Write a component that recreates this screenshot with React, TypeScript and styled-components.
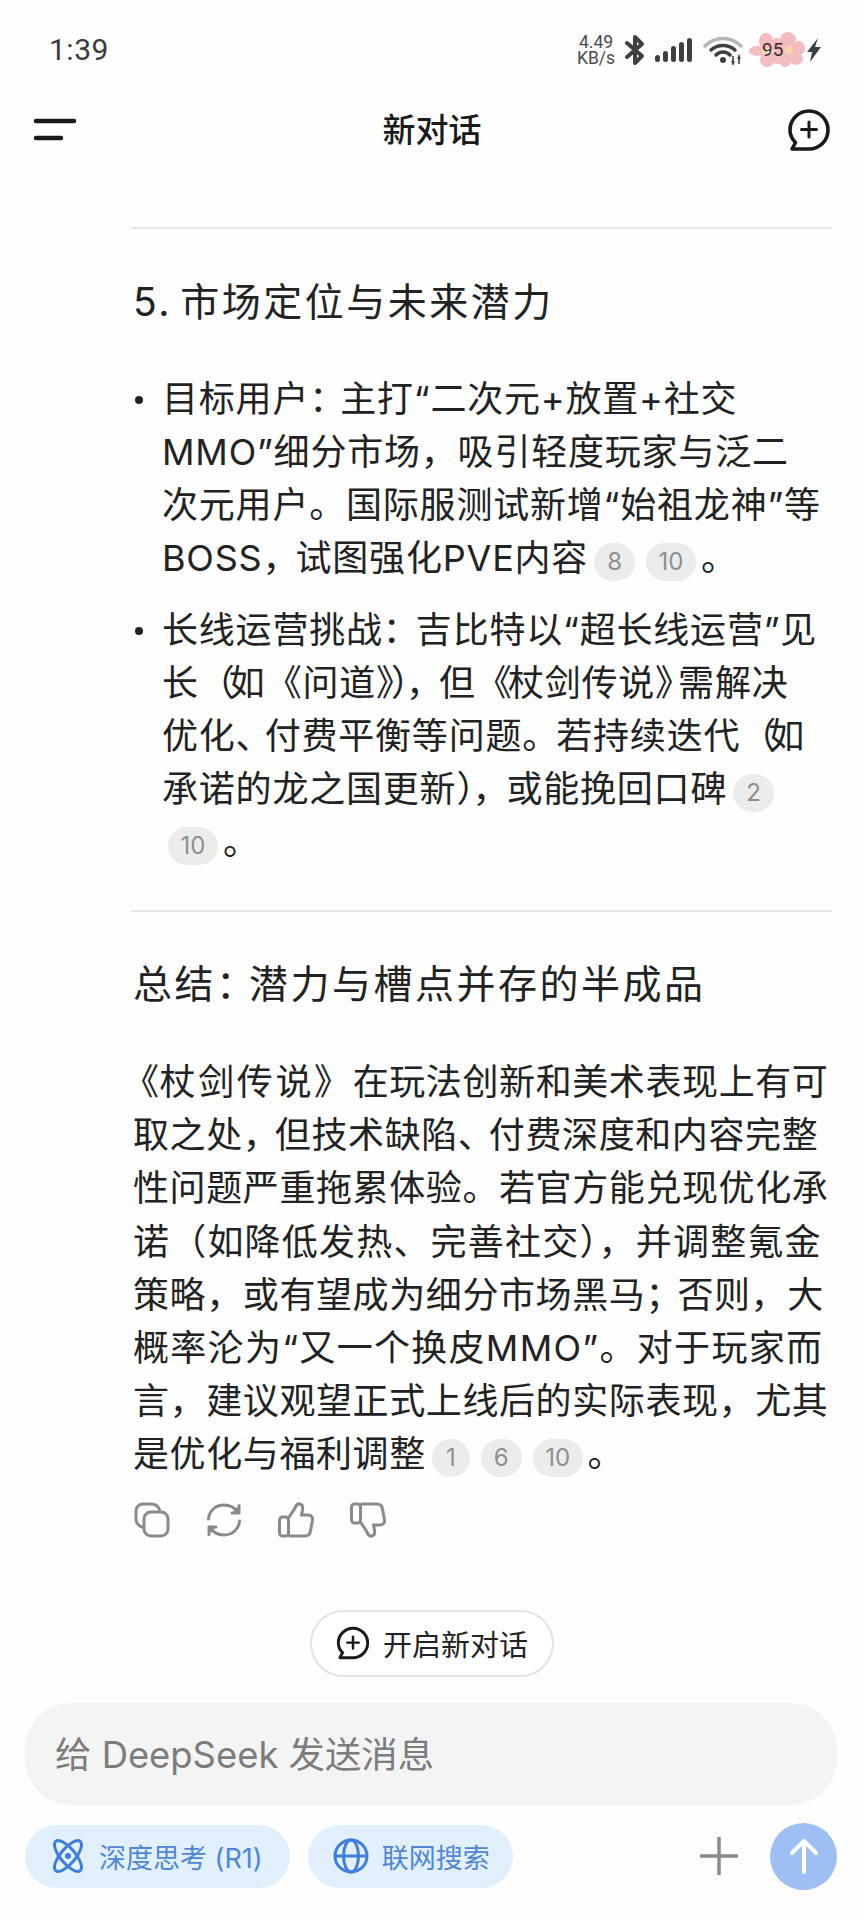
import React from "react";
import styled, { createGlobalStyle } from "styled-components";

const Global = createGlobalStyle`
  html, body { margin: 0; padding: 0; background: #fff; }
  * { box-sizing: border-box; }
`;
const FONT = `Inter, "Noto Sans CJK SC", "Noto Sans", sans-serif`;

const Page = styled.div`
  width: 864px; height: 1920px; overflow: hidden; background: #fefefe;
  display: flex; flex-direction: column; font-family: ${FONT}; color: #1f1f1f;
`;
const StatusBar = styled.div`
  height: 88px; padding: 32px 43px 0 49px; display: flex; justify-content: space-between; align-items: flex-start;
`;
const Clock = styled.div`
  font-family: Roboto, sans-serif; font-size: 30px; line-height: 36px; color: #3a3a3a; letter-spacing: 0.5px;
`;
const StatusIcons = styled.div`
  display: flex; align-items: center; height: 36px;
`;
const Speed = styled.div`
  font-family: Roboto, sans-serif; font-size: 17.5px; line-height: 16px; color: #4a4a4a; text-align: center; width: 40px; margin-right: 8px;
`;
const FlowerBattery = styled.div`
  position: relative; width: 56px; height: 36px; margin: 0 2px 0 6px;
`;
const BatteryText = styled.span`
  position: absolute; left: 13px; top: 6px; font-family: Roboto, sans-serif; font-size: 19px; line-height: 24px; color: #3b2a2a;
`;
const Header = styled.div`
  height: 84px; padding: 0 33px; display: flex; align-items: center; justify-content: space-between;
`;
const Title = styled.div`
  font-size: 33px; font-weight: 500; color: #1a1a1a; line-height: 44px;
`;
const Content = styled.div`
  padding: 55px 32px 0 131px; display: flex; flex-direction: column; flex: 1;
`;
const Rule = styled.div<{ $top?: number }>`
  height: 2px; background: #e6e6e6; margin-top: ${(p) => p.$top ?? 0}px;
`;
const Heading = styled.div<{ $top: number }>`
  margin: ${(p) => p.$top}px 0 0 2px; font-size: 39px; letter-spacing: 2.5px; word-spacing: -5px; line-height: 56px; color: #222; white-space: nowrap;
`;
const List = styled.ul`
  list-style: none; margin: 43px 0 0; padding: 0 0 0 31px; display: flex; flex-direction: column; gap: 19px;
`;
const Item = styled.li`
  position: relative; font-size: 36px; line-height: 53px; letter-spacing: 0.8px; color: #222; white-space: nowrap;
  &::before {
    content: ""; position: absolute; left: -27px; top: 23px; width: 8px; height: 8px; border-radius: 50%; background: #222;
  }
`;
const Paragraph = styled.p`
  margin: 44px 0 0 2px; font-size: 36px; line-height: 53.2px; letter-spacing: 0.6px; color: #222; white-space: nowrap;
`;
/* A run of text whose tracking differs: the reference's font sets its punctuation narrower or wider than Noto does. */
const Run = styled.span<{ $ls: number; $l?: number }>`
  letter-spacing: ${(p) => p.$ls}px; margin-left: ${(p) => p.$l ?? 0}px;
`;
const Cite = styled.span<{ $wide?: boolean }>`
  display: inline-block; vertical-align: 1px; height: 38px; min-width: 38px; padding: 0 ${(p) => (p.$wide ? 12.5 : 13)}px;
  margin: 0 5px 0 6px; border-radius: 19px; background: #ececec; color: #8f8f8f;
  font-size: 24px; line-height: 38px; text-align: center; letter-spacing: 0;
`;
const Actions = styled.div`
  display: flex; gap: 36px; margin: 20px 0 0 3px; color: #8a8a8a;
`;
const NewChatRow = styled.div`
  display: flex; margin: 72px 0 0 179px;
`;
const NewChatButton = styled.div`
  height: 67px; width: 244px; border: 2px solid #e3e3e3; border-radius: 34px; background: #fff;
  display: flex; align-items: center; justify-content: center; gap: 13px; font-size: 29px; color: #222;
`;
const Composer = styled.div`
  padding: 0 27px 30px 25px; display: flex; flex-direction: column; gap: 17px;
`;
const InputBox = styled.div`
  height: 102px; border-radius: 46px; background: #f4f4f5; padding: 0 0 4px 30px; display: flex; align-items: center;
  font-size: 36.4px; color: #7c7c7c; white-space: nowrap;
`;
const Toolbar = styled.div`
  display: flex; align-items: center; gap: 18px; height: 68px;
`;
const Chip = styled.div<{ $right: number }>`
  height: 63px; border-radius: 32px; background: #e2effd; color: #4f86d8; padding: 0 ${(p) => p.$right}px 0 25px;
  display: flex; align-items: center; gap: 13px; font-size: 27px; white-space: nowrap;
`;
const Spacer = styled.div`flex: 1;`;
const SendButton = styled.div`
  width: 67px; height: 67px; border-radius: 50%; background: #9dbff4; display: flex; align-items: center; justify-content: center; margin-left: 14px;
`;

const Bars = () => (
  <svg width="37" height="26" viewBox="0 0 37 26" style={{ marginRight: 11 }}>
    <g fill="#3f3f3f">
      <rect x="0" y="18" width="5" height="7" rx="2.5" />
      <rect x="8" y="14" width="5" height="11" rx="2.5" />
      <rect x="16" y="9" width="5" height="16" rx="2.5" />
      <rect x="24" y="5" width="5" height="20" rx="2.5" />
      <rect x="32" y="1" width="5" height="24" rx="2.5" />
    </g>
  </svg>
);
const Bluetooth = () => (
  <svg width="22" height="32" viewBox="0 0 22 32" style={{ marginRight: 9 }}>
    <path d="M3 9 L18 22 L11 29 V3 L18 10 L3 23" fill="none" stroke="#3f3f3f" strokeWidth="4" strokeLinejoin="round" strokeLinecap="round" />
  </svg>
);
const Wifi = () => (
  <svg width="40" height="30" viewBox="0 0 40 30">
    <path d="M2 11 C12 1 28 1 38 11" fill="none" stroke="#b5b5b5" strokeWidth="3.5" strokeLinecap="round" />
    <path d="M8 15 C15 9 25 9 32 15" fill="none" stroke="#3f3f3f" strokeWidth="3.5" strokeLinecap="round" />
    <path d="M13 20 C17 16 23 16 27 20" fill="none" stroke="#3f3f3f" strokeWidth="3.5" strokeLinecap="round" />
    <circle cx="20" cy="25" r="3" fill="#3f3f3f" />
    <path d="M30 21 V29 M29 26 L30 29 L31 26 M36 29 V21 M35 24 L36 21 L37 24" stroke="#3f3f3f" strokeWidth="1.6" fill="none" />
  </svg>
);
const Flowers = () => (
  <svg width="56" height="36" viewBox="0 0 56 36">
    <g fill="#f3bcc0">
      <ellipse cx="8" cy="19" rx="8" ry="5" />
      <ellipse cx="17" cy="9" rx="7" ry="8" />
      <ellipse cx="28" cy="13" rx="7" ry="7" />
      <ellipse cx="18" cy="28" rx="7" ry="7" />
      <ellipse cx="28" cy="25" rx="7" ry="7" />
      <ellipse cx="39" cy="8" rx="8" ry="8" />
      <ellipse cx="50" cy="16" rx="6" ry="7" />
      <ellipse cx="36" cy="28" rx="6" ry="7" />
      <ellipse cx="47" cy="27" rx="7" ry="6" />
      <ellipse cx="40" cy="19" rx="7" ry="7" />
    </g>
    <circle cx="40" cy="18" r="4" fill="#f7d6a8" />
    <circle cx="15" cy="19" r="3" fill="#f7d6a8" />
  </svg>
);
const Bolt = () => (
  <svg width="14" height="24" viewBox="0 0 14 24">
    <path d="M11 0 L0 14 H5 L3 24 L14 9 H8 Z" fill="#3f3f3f" />
  </svg>
);
const Menu = () => (
  <svg width="44" height="24" viewBox="0 0 44 24">
    <path d="M3 3 H41 M3 20 H28" stroke="#1a1a1a" strokeWidth="4.5" strokeLinecap="round" fill="none" />
  </svg>
);
const PlusBubble = ({ size, stroke }: { size: number; stroke: number }) => (
  <svg width={size} height={size} viewBox="0 0 44 44">
    <path
      d="M22 3 C32.5 3 41 11.5 41 22 C41 32.5 32.5 41 22 41 H5 L8.5 34.5 C5 31 3 26.7 3 22 C3 11.5 11.5 3 22 3 Z"
      fill="none" stroke="#1a1a1a" strokeWidth={stroke} strokeLinejoin="round"
    />
    <path d="M22 14 V29 M14.5 21.5 H29.5" stroke="#1a1a1a" strokeWidth={stroke - 0.6} strokeLinecap="round" />
  </svg>
);
const Copy = () => (
  <svg width="36" height="36" viewBox="0 0 36 36" fill="none" stroke="currentColor" strokeWidth="3">
    <rect x="10" y="10" width="24" height="24" rx="7" />
    <path d="M8 25 C4 23.5 2 21 2 17 V9 C2 5 5 2 9 2 H17 C21 2 24 4 25.5 7.5" strokeLinecap="round" />
  </svg>
);
const Refresh = () => (
  <svg width="36" height="36" viewBox="0 0 36 36" fill="none" stroke="currentColor" strokeWidth="3" strokeLinecap="round" strokeLinejoin="round">
    <path d="M2.5 17 C3 9 9.5 3 18 3 C24 3 28.5 5.5 32 10" />
    <path d="M33 3.5 V11 H26" fill="currentColor" />
    <path d="M33.5 19 C33 27 26.5 33 18 33 C12 33 7.5 30.5 4 26" />
    <path d="M3 32.5 V25 H10" fill="currentColor" />
  </svg>
);
const Thumb = () => (
  <>
    <rect x="1.5" y="15" width="9" height="19" rx="3" />
    <path d="M10.5 16 L17 6 C18 3 20 1.5 22 2 C24.5 2.5 25 5 24.5 8 L23.5 13 H30 C33.5 13 35 15.5 34.5 18 L32.5 29 C32 32 30 34 27 34 H10.5" />
  </>
);
const Like = () => (
  <svg width="36" height="36" viewBox="0 0 36 36" fill="none" stroke="currentColor" strokeWidth="3" strokeLinejoin="round">
    <Thumb />
  </svg>
);
const Dislike = () => (
  <svg width="36" height="36" viewBox="0 0 36 36" fill="none" stroke="currentColor" strokeWidth="3" strokeLinejoin="round">
    <g transform="matrix(1 0 0 -1 0 36)">
      <Thumb />
    </g>
  </svg>
);
const Atom = () => (
  <svg width="36" height="36" viewBox="0 0 36 36" fill="none" stroke="#3f7fdc" strokeWidth="3">
    <ellipse cx="18" cy="18" rx="7.5" ry="19" transform="rotate(-40 18 18)" />
    <ellipse cx="18" cy="18" rx="7.5" ry="19" transform="rotate(40 18 18)" />
    <circle cx="18" cy="18" r="3" fill="#3f7fdc" stroke="none" />
  </svg>
);
const Globe = () => (
  <svg width="36" height="36" viewBox="0 0 36 36" fill="none" stroke="#3f7fdc" strokeWidth="3">
    <circle cx="18" cy="18" r="16" />
    <ellipse cx="18" cy="18" rx="7.5" ry="16" />
    <path d="M2 18 H34" />
  </svg>
);
const Plus = () => (
  <svg width="38" height="38" viewBox="0 0 38 38">
    <path d="M19 0 V38 M0 19 H38" stroke="#8a8a8a" strokeWidth="3.5" strokeLinecap="round" />
  </svg>
);
const ArrowUp = () => (
  <svg width="30" height="36" viewBox="0 0 30 36" fill="none" stroke="#fff" strokeWidth="4" strokeLinecap="round" strokeLinejoin="round">
    <path d="M15 34 V3 M3 15 L15 3 L27 15" />
  </svg>
);

export default function App() {
  return (
    <Page>
      <Global />
      <StatusBar>
        <Clock>1:39</Clock>
        <StatusIcons>
          <Speed>4.49<br />KB/s</Speed>
          <Bluetooth />
          <Bars />
          <Wifi />
          <FlowerBattery>
            <Flowers />
            <BatteryText>95</BatteryText>
          </FlowerBattery>
          <Bolt />
        </StatusIcons>
      </StatusBar>
      <Header>
        <Menu />
        <Title>新对话</Title>
        <PlusBubble size={44} stroke={3.6} />
      </Header>
      <Content>
        <Rule />
        <Heading $top={45}>5. 市场定位与未来潜力</Heading>
        <List>
          <Item>
            目标用户<Run $ls={-5}>：</Run>主打“二次元+放置+社交<br />
            MMO”细分市场，吸引轻度玩家与泛二<br />
            次元用户。国际服测试新增“始祖龙神”等<br />
            BOSS<Run $ls={-3}>，</Run>试图强化PVE内容<Cite>8</Cite><Cite $wide>10</Cite>。
          </Item>
          <Item>
            长线运营挑战<Run $ls={-3}>：</Run>吉比特以“超长线运营”见<br />
            长<Run $ls={-6}>（</Run>如《问道<Run $ls={-3}>》），</Run>但<Run $ls={-4}>《</Run>杖剑传说<Run $ls={-13}>》</Run>需解决<br />
            优化<Run $ls={-7}>、</Run>付费平衡等问题<Run $ls={-2}>。</Run>若持续迭代<Run $ls={-8}>（</Run>如<br />
            承诺的龙之国更新<Run $ls={-2}>），</Run>或能挽回口碑<Cite>2</Cite><br />
            <Cite $wide>10</Cite>。
          </Item>
        </List>
        <Rule $top={41} />
        <Heading $top={44}>总结<Run $ls={-6}>：</Run>潜力与槽点并存的半成品</Heading>
        <Paragraph>
          <Run $ls={0.6} $l={-10}>《</Run><Run $ls={2.6}>杖剑传说》</Run>在玩法创新和美术表现上有可<br />
          取之处<Run $ls={-4}>，</Run>但技术缺陷<Run $ls={-5}>、</Run>付费深度和内容完整<br />
          性问题严重拖累体验。若官方能兑现优化承<br />
          <Run $ls={1.2}>诺（如降低发热、完善社交），并调整氪金</Run><br />
          策略，或有望成为细分市场黑马<Run $ls={-4}>；</Run>否则，大<br />
          <Run $ls={1.3}>概率沦为“又一个换皮MMO”。对于玩家而</Run><br />
          言，建议观望正式上线后的实际表现，尤其<br />
          是优化与福利调整<Cite>1</Cite><Cite>6</Cite><Cite $wide>10</Cite>。
        </Paragraph>
        <Actions>
          <Copy />
          <Refresh />
          <Like />
          <Dislike />
        </Actions>
        <NewChatRow>
          <NewChatButton>
            <PlusBubble size={34} stroke={3.8} />
            开启新对话
          </NewChatButton>
        </NewChatRow>
      </Content>
      <Composer>
        <InputBox>给 DeepSeek 发送消息</InputBox>
        <Toolbar>
          <Chip $right={27}><Atom />深度思考 (R1)</Chip>
          <Chip $right={23}><Globe />联网搜索</Chip>
          <Spacer />
          <Plus />
          <SendButton><ArrowUp /></SendButton>
        </Toolbar>
      </Composer>
    </Page>
  );
}
